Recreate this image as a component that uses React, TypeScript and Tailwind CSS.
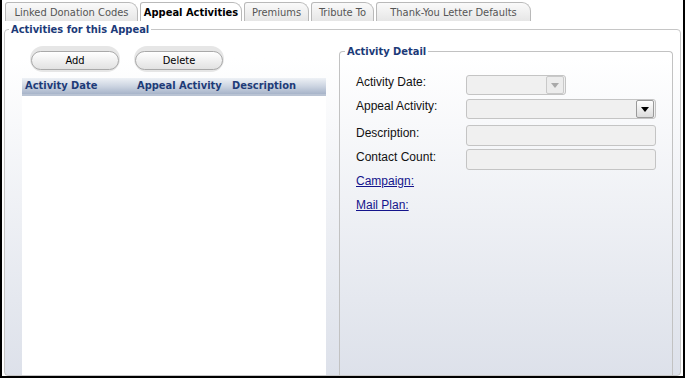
import React from "react";

const tabFont = { fontFamily: '"DejaVu Sans Condensed", "DejaVu Sans", sans-serif' };

const tabs = [
  { label: "Linked Donation Codes", w: "w-[133px]" },
  { label: "Appeal Activities", w: "w-[102px]", active: true },
  { label: "Premiums", w: "w-[65px]" },
  { label: "Tribute To", w: "w-[63px]" },
  { label: "Thank-You Letter Defaults", w: "w-[155px]" },
];

function Tab({ label, w, active }: { label: string; w: string; active?: boolean }) {
  return (
    <div
      className={`${w} h-[19px] flex items-center justify-center rounded-tl-[3px] rounded-tr-[9px] border border-b-0 border-[#b9b9b9] text-[11px] leading-none ${
        active ? "bg-white font-bold text-black" : "bg-gradient-to-b from-[#fafafa] to-[#e6e6e6] text-[#555]"
      }`}
    >
      {label}
    </div>
  );
}

function PillButton({ label }: { label: string }) {
  return (
    <div className="rounded-full p-[1px] bg-[#e6e6e6]">
      <button className="w-[88px] h-[19px] rounded-full border border-[#a9a9a9] bg-gradient-to-b from-[#ffffff] to-[#e2e2e2] text-[11px] leading-none text-black">
        {label}
      </button>
    </div>
  );
}

function DropButton({ disabled }: { disabled?: boolean }) {
  return (
    <div
      className={`w-[18px] h-[18px] rounded-[2px] border flex items-center justify-center ${
        disabled ? "border-[#c9c9c9] bg-[#ececec]" : "border-[#9a9a9a] bg-gradient-to-b from-[#ffffff] to-[#dcdcdc]"
      }`}
    >
      <svg width="8" height="5" viewBox="0 0 8 5">
        <path d="M0 0 H8 L4 5 Z" fill={disabled ? "#a9a9a9" : "#000"} />
      </svg>
    </div>
  );
}

function Field({ className = "" }: { className?: string }) {
  return <div className={`h-[21px] rounded-[3px] border border-[#c4c4c4] bg-[#f0f0f0] ${className}`} />;
}

export default function App() {
  return (
    <div
      className="w-[685px] h-[378px] flex flex-col bg-white border-l-2 border-r-2 border-b-2 border-black overflow-hidden"
      style={tabFont}
    >
      <div className="h-[21px] flex items-end gap-[2px] pl-[3px] shrink-0">
        {tabs.map((t) => (
          <Tab key={t.label} {...t} />
        ))}
      </div>

      <fieldset className="mt-[2px] mx-[2px] flex-1 min-h-0 flex rounded-[4px] border border-[#c6c6c6] bg-gradient-to-b from-[#ffffff] from-[8%] to-[#dde1ea] pl-[17px] pr-[7px]">
        <legend className="-ml-[13px] px-[2px] text-[11px] font-bold text-[#1c3a78] leading-[13px]">
          Activities for this Appeal
        </legend>

        <div className="w-[304px] flex flex-col pt-[10px]">
          <div className="flex gap-[14px] pl-[8px]">
            <PillButton label="Add" />
            <PillButton label="Delete" />
          </div>
          <div className="mt-[6px] h-[18px] flex items-center bg-gradient-to-b from-[#eef1f6] via-[#cdd5e2] to-[#a7b4c9] border-b-2 border-[#b9c3d3] text-[11px] font-bold text-[#1e3b78] pl-[3px]">
            <span className="w-[112px]">Activity Date</span>
            <span className="w-[95px]">Appeal Activity</span>
            <span>Description</span>
          </div>
          <div className="flex-1 bg-white" />
        </div>

        <fieldset className="ml-[13px] mt-[9px] flex-1 rounded-t-[4px] border border-b-0 border-[#c2c2c2] pl-[16px] pr-[16px]">
          <legend className="-ml-[11px] px-[2px] text-[11px] font-bold text-[#1c3a78] leading-[13px]">
            Activity Detail
          </legend>
          <div
            className="grid grid-cols-[110px_190px] text-[12px] text-[#111] pt-[17px]"
            style={{ fontFamily: '"Liberation Sans", Arial, sans-serif' }}
          >
            <div className="h-[20px] flex items-center pb-[6px]">Activity Date:</div>
            <div className="h-[20px] w-[100px] rounded-[3px] border border-[#c4c4c4] bg-[#f0f0f0] flex items-center justify-end pr-[1px]">
              <DropButton disabled />
            </div>

            <div className="mt-[4px] h-[20px] flex items-center pb-[6px]">Appeal Activity:</div>
            <div className="mt-[4px] h-[20px] rounded-[3px] border border-[#c4c4c4] bg-[#f0f0f0] flex items-center justify-end pr-[1px]">
              <DropButton />
            </div>

            <div className="mt-[6px] h-[21px] flex items-center pb-[6px]">Description:</div>
            <Field className="mt-[6px]" />

            <div className="mt-[3px] h-[21px] flex items-center pb-[6px]">Contact Count:</div>
            <Field className="mt-[3px]" />

            <div className="col-span-2 mt-[1px] h-[20px] flex items-center">
              <a href="#" className="text-[#14148c] underline">Campaign:</a>
            </div>
            <div className="col-span-2 mt-[4px] h-[20px] flex items-center">
              <a href="#" className="text-[#14148c] underline">Mail Plan:</a>
            </div>
          </div>
        </fieldset>
      </fieldset>
    </div>
  );
}
